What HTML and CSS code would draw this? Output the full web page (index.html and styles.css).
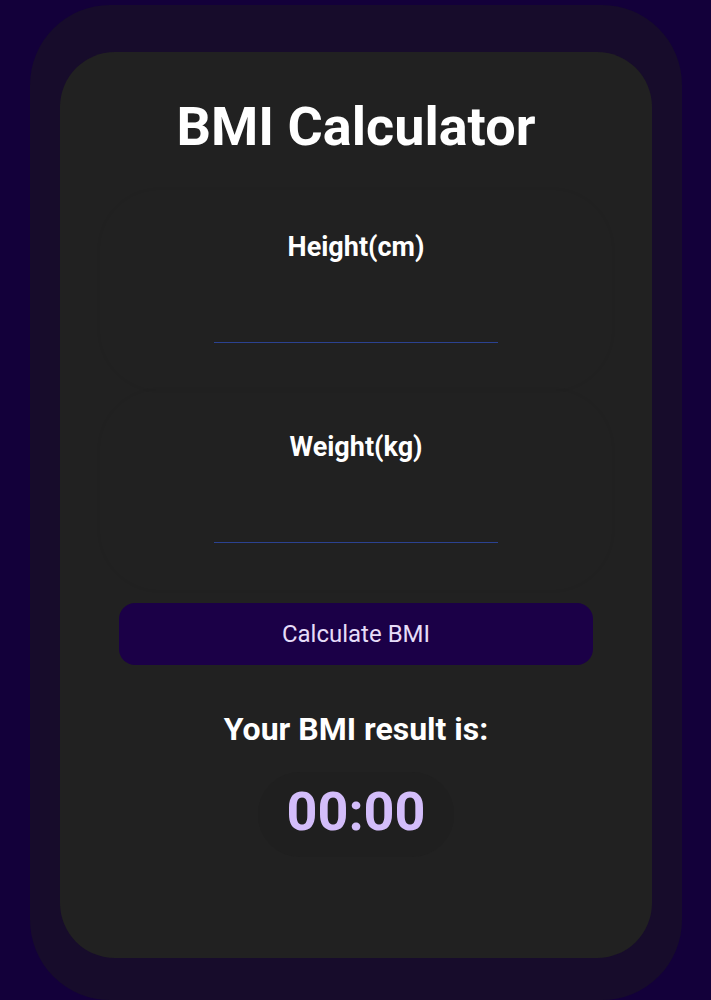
FILE: index.html
```html
<!DOCTYPE html>
<html lang="en">
<head>
<meta charset="utf-8">
<title>BMI Calculator</title>
<link rel="stylesheet" href="styles.css">
</head>
<body>
<div class="frame">
  <main class="card">
    <h1 class="title">BMI Calculator</h1>
    <div class="field field-first">
      <label class="field-label" for="h">Height(cm)</label>
      <input class="field-input" id="h" type="text">
    </div>
    <div class="field">
      <label class="field-label" for="w">Weight(kg)</label>
      <input class="field-input" id="w" type="text">
    </div>
    <button class="calc-btn" type="button">Calculate BMI</button>
    <h2 class="result-label">Your BMI result is:</h2>
    <div class="result-value">00:00</div>
  </main>
</div>
</body>
</html>
```
FILE: styles.css
```css
html, body {
  margin: 0;
  padding: 0;
}
body {
  background: #13003a;
  font-family: Roboto, "Liberation Sans", sans-serif;
  color: #fff;
  height: 1000px;
  overflow: hidden;
}
.frame {
  margin: 5px 29px 0 30px;
  height: 995px;
  box-sizing: border-box;
  background: #170c2b;
  border-radius: 80px;
  padding: 47px 30px 0 30px;
}
.card {
  height: 906px;
  background: #212121;
  border-radius: 55px;
  display: flex;
  flex-direction: column;
  align-items: center;
  padding-top: 43px;
  box-sizing: border-box;
}
.title {
  margin: 0;
  font-size: 54px;
  font-weight: 700;
  line-height: 64px;
}
.field {
  align-self: stretch;
  margin: 0 40px;
  height: 200px;
  flex: none;
  border-radius: 60px;
  box-shadow: 0 0 4px rgba(0, 0, 0, 0.045);
  display: flex;
  flex-direction: column;
  align-items: center;
  box-sizing: border-box;
}
.field-first {
  margin-top: 31px;
}
.field-label {
  margin-top: 41px;
  font-size: 27px;
  font-weight: 700;
  line-height: 32px;
}
.field-input {
  margin-top: 58px;
  width: 284px;
  height: 21px;
  padding: 0;
  background: transparent;
  border: none;
  border-bottom: 1.5px solid #2b4291;
  outline: none;
  color: #fff;
}
.calc-btn {
  align-self: stretch;
  flex: none;
  margin: 13px 59px 0;
  height: 62px;
  border: none;
  border-radius: 16px;
  background: #1b0047;
  color: #e6dcf8;
  font-family: Roboto, "Liberation Sans", sans-serif;
  font-size: 24px;
  font-weight: 400;
}
.result-label {
  margin: 45px 0 0;
  font-size: 32px;
  font-weight: 700;
  line-height: 38px;
}
.result-value {
  margin-top: 24px;
  width: 196px;
  height: 85px;
  padding-bottom: 6px;
  box-sizing: border-box;
  border-radius: 42px;
  background: #1f1f1f;
  display: flex;
  align-items: center;
  justify-content: center;
  font-size: 54px;
  line-height: 54px;
  font-weight: 700;
  color: #d3bdfa;
}
```
